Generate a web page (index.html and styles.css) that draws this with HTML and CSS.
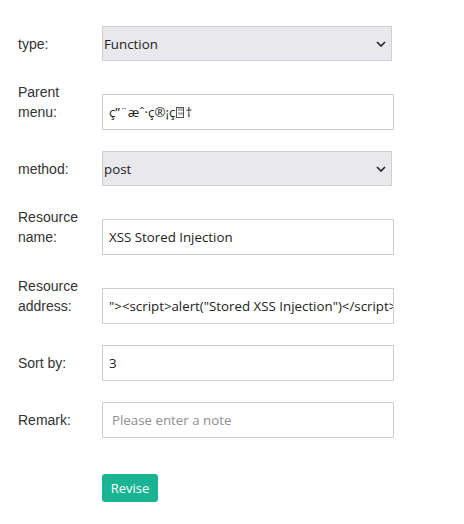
FILE: index.html
```html
<!DOCTYPE html>
<html>
<head>
<meta charset="utf-8">
<link rel="stylesheet" href="styles.css">
</head>
<body>
<form class="form">
  <div class="row">
    <label class="lbl">type:</label>
    <div class="select-wrap">
      <select class="sel"><option>Function</option></select>
      <svg class="chev" width="10" height="6" viewBox="0 0 10 6"><path d="M1 1 L5 5 L9 1" fill="none" stroke="#222" stroke-width="1.6"/></svg>
    </div>
  </div>
  <div class="row">
    <label class="lbl">Parent menu:</label>
    <div class="inp field">ç”¨æˆ·ç®¡ç<span class="hex"><span>00</span><span>90</span></span>†</div>
  </div>
  <div class="row">
    <label class="lbl">method:</label>
    <div class="select-wrap">
      <select class="sel"><option>post</option></select>
      <svg class="chev" width="10" height="6" viewBox="0 0 10 6"><path d="M1 1 L5 5 L9 1" fill="none" stroke="#222" stroke-width="1.6"/></svg>
    </div>
  </div>
  <div class="row">
    <label class="lbl">Resource name:</label>
    <input class="inp" type="text" value="XSS Stored Injection">
  </div>
  <div class="row">
    <label class="lbl">Resource address:</label>
    <input class="inp" type="text" value="&quot;&gt;&lt;script&gt;alert(&quot;Stored XSS Injection&quot;)&lt;/script&gt;">
  </div>
  <div class="row">
    <label class="lbl">Sort by:</label>
    <input class="inp" type="text" value="3">
  </div>
  <div class="row">
    <label class="lbl">Remark:</label>
    <input class="inp note" type="text" placeholder="Please enter a note">
  </div>
  <div class="actions">
    <button type="button" class="btn">Revise</button>
  </div>
</form>
</body>
</html>
```

FILE: styles.css
```css
body {
  margin: 0;
  background: #fff;
  font-family: "Liberation Sans", Arial, sans-serif;
  color: #333;
}
.form {
  padding: 26px 0 0 18px;
}
.row {
  display: flex;
  align-items: last baseline;
  margin-bottom: 21px;
}
.lbl {
  flex: none;
  width: 70px;
  margin-right: 14px;
  font-size: 14px;
  line-height: 20px;
  color: #333;
}
.select-wrap {
  position: relative;
  display: flex;
}
.sel {
  -webkit-appearance: none;
  appearance: none;
  box-sizing: border-box;
  width: 290px;
  height: 35px;
  margin: 0;
  padding: 0 0 0 1px;
  background: #e9e9ed;
  border: 1px solid #cfcfcf;
  border-radius: 0;
  font-family: "Open Sans", sans-serif;
  font-size: 13.3px;
  color: #222;
  outline: none;
}
.chev {
  position: absolute;
  right: 6px;
  top: 15px;
  pointer-events: none;
}
.inp {
  box-sizing: border-box;
  width: 292px;
  height: 36px;
  margin: 0;
  padding: 0 0 0 6px;
  border: 1px solid #cfcfcf;
  border-radius: 0;
  background: #fff;
  font-family: "Open Sans", sans-serif;
  font-size: 13.3px;
  color: #222;
  outline: none;
}
.field {
  display: flex;
  align-items: center;
  white-space: nowrap;
  overflow: hidden;
}
.hex {
  display: inline-flex;
  flex-direction: column;
  justify-content: center;
  align-items: center;
  box-sizing: border-box;
  width: 8px;
  height: 11px;
  margin: 0 1px;
  border: 1px solid #555;
  font-family: "DejaVu Sans Mono", monospace;
  font-size: 4px;
  line-height: 4px;
  color: #333;
}
.note {
  padding-left: 9px;
}
.inp::placeholder {
  color: #8f8f8f;
}
.actions {
  padding-left: 84px;
  margin-top: 36px;
}
.btn {
  width: 56px;
  height: 28px;
  border: none;
  border-radius: 3px;
  background: #1ab394;
  color: #fff;
  font-family: "Open Sans", sans-serif;
  font-size: 13px;
  padding: 0;
}
```
